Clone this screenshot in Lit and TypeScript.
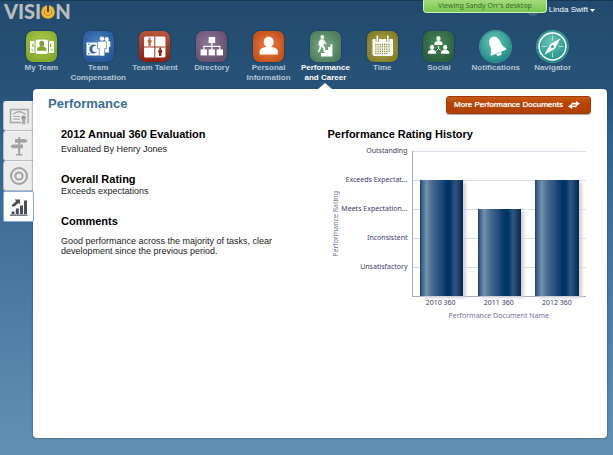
import { LitElement, html, css, svg } from "lit";
import { customElement, property, state } from "lit/decorators.js";
import { classMap } from "lit/directives/class-map.js";

const person = (x: number, y: number, s: number) => svg`
  <g transform="translate(${x} ${y}) scale(${s})">
    <ellipse cx="0" cy="-3.6" rx="2.8" ry="3.4" />
    <path d="M-5.6 5V3.200C-5.600 1-3.600.6-1.600-.4H1.600C3.600.6 5.600 1 5.600 3.200V5Z" />
  </g>`;

const figure = (x: number, y: number, s: number) => svg`
  <g transform="translate(${x} ${y}) scale(${s})">
    <circle cx="0" cy="-6.6" r="2.2" />
    <path d="M-2.6-4.600H2.600Q3.800-4.600 3.800-3.200V1.600H2.300V8H-2.300V1.600H-3.800V-3.200Q-3.800-4.600-2.600-4.600Z" />
  </g>`;

const icons: Record<string, unknown> = {
  team: svg`
    <g fill="#fff">
      <rect x="4" y="10" width="24" height="12" rx="1" />
      <rect x="9" y="8" width="13.500" height="15.500" rx="2.200" stroke="#86ab30" stroke-width="1" />
    </g>
    <g fill="#7ea22c">${person(15.8, 15.6, 0.84)}</g>
    <path d="M5.500 19h2M7 13v3M26.500 19h-2M24.500 13v3" fill="none" stroke="#86ab30" stroke-width="1.2" />`,
  compensation: svg`
    <g fill="#fff">
      <path d="M3.500 11.500h15v13h-15Z" />
      <ellipse cx="10.5" cy="18" rx="4.200" ry="4.600" fill="#2f66aa" />
      <ellipse cx="12.6" cy="18" rx="3.200" ry="3.200" />
      <path d="M5 13.200h1.600M5 22.800h1.600" stroke="#2f66aa" />
      ${figure(23.8, 14.2, 0.92)}
      <g stroke="#2f66aa" stroke-width=".5">${figure(19, 15.6, 1.18)}</g>
    </g>`,
  talent: svg`
    <rect x="5" y="5.5" width="21.5" height="21" rx="1.6" fill="#fff" />
    <path d="M15.8 5.500v21M5 16h21.500" stroke="#9c3820" stroke-width="1" />
    <g fill="#c06a38">${figure(10.6, 11, 0.5)}</g>
    <g fill="#8f1c10">${figure(21.2, 21, 0.5)}</g>`,
  directory: svg`
    <g fill="#fff">
      <rect x="12.6" y="6" width="6.6" height="6" />
      <rect x="4.6" y="18.4" width="6.4" height="6" />
      <rect x="12.6" y="18.4" width="6.4" height="6" />
      <rect x="20.6" y="18.4" width="6.4" height="6" />
    </g>
    <path d="M15.8 12v7M7.800 19v-3.600h16V19" fill="none" stroke="#fff" stroke-width="1.2" />`,
  personal: svg`
    <g fill="#fff">
      <ellipse cx="15.7" cy="11" rx="5" ry="5.4" />
      <path d="M6.600 23.400v-2.600c0-3 3-4 6.400-5h5.400c3.400 1 6.400 2 6.400 5v2.600Z" />
    </g>`,
  career: svg`
    <g fill="#fff">
      <circle cx="12.3" cy="6" r="1.9" />
      <path d="M10.8 8.3l3 .2 1.2 2.6 1.5 1.4-.6.9-2-1.3-.4 2.7 1.6 2-.3 4.2h-1.3l-.1-3.6-2-1.900-.6 2.400-1.900 3.500-1.200-.6 1.700-3.600.4-4.200-.3 1.800-1.200-.4.5-3.900Z" />
      <path d="M11 25.500v-3.400h3.800v-3.200h3.400v-3h2.200v-2.700h2v12.300Z" />
    </g>`,
  time: svg`
    <path d="M5.500 9Q5.500 8 6.500 8H25Q26 8 26 9V22.500Q26 25 23.500 25H8Q5.500 25 5.500 22.500Z" fill="#fff" />
    <path d="M10.300 5.500v5M20.800 5.500v5" stroke="#8e8a2c" stroke-width="3.400" />
    <path d="M10.300 5.500v4M20.800 5.500v4" stroke="#fff" stroke-width="1.800" stroke-linecap="round" />
    <g stroke="#8e8a2c" stroke-width="1.300" stroke-dasharray="1.3 .9">
      <path d="M8.200 13.500h15.400M8.200 15.800h15.400M8.200 18.100h15.400M8.200 20.400h15.400M8.200 22.500h13" />
    </g>`,
  social: svg`
    <g fill="#fff">
      ${person(15.5, 10.2, 0.74)}${person(9, 19, 0.74)}${person(22.2, 19, 0.74)}
    </g>
    <path d="M15.600 15v2.600M15.600 17.400l-2 2M15.600 17.400l2 2" stroke="#fff" stroke-width=".9" />`,
  bell: svg`
    <g fill="#fff" transform="rotate(-22 16 16)">
      <path d="M16.400 5.500c3.600 0 5.300 2.800 5.400 6.200.1 4.200.6 6.800 3 9.100v1.500H8v-1.500c2.400-2.300 2.900-4.900 3-9.100.1-3.400 1.800-6.200 5.400-6.200Z" />
      <path d="M13.500 22.600a2.800 2.800 0 0 0 5.600 0Z" />
    </g>`,
  compass: svg`
    <circle cx="15.500" cy="15.500" r="13.400" fill="none" stroke="#fff" stroke-width="1.500" />
    <path d="M15.500 4.500v5M15.500 21.500v5M4.500 15.500h5M21.500 15.500h5" stroke="#a9e0d4" stroke-width="1" />
    <path d="M23.600 7.200l-5.800 10.600-10.400 6 5.800-10.600Z" fill="#fff" />
    <circle cx="15.500" cy="15.500" r="1.500" fill="#3d9f92" />`,
};

const tabIcons: Record<string, unknown> = {
  certificate: svg`
    <path d="M12.500 16.500H1.500V3.500h17.600v13h-1" fill="none" stroke="#a5a5a8" stroke-width="1.4" />
    <path d="M4 8.400Q10 3 16.600 8.400M4.400 10.500h6.500M4.400 13.200h6.500" fill="none" stroke="#a5a5a8" stroke-width="1.2" />
    <circle cx="14.600" cy="11.800" r="2.300" fill="#98989c" />
    <path d="M13.200 13v6l1.500-1.200L16.200 19v-6Z" fill="#a5a5a8" />`,
  signpost: svg`
    <g fill="#a2a2a6">
      <path d="M9.200 1h2v18h-2ZM7 18h6.400v1.600H7Z" />
      <path d="M6 3h10.500l2.300 1.900-2.300 1.900H6ZM14 8.500H3.600L1.300 10.400l2.300 1.900H14Z" />
    </g>`,
  target: svg`
    <g fill="none" stroke="#a2a2a6" stroke-width="2">
      <circle cx="10" cy="10" r="8" />
      <circle cx="10" cy="10" r="3.600" />
    </g>`,
  growth: svg`
    <g fill="#4b4e58">
      <path d="M1 17.600h17.500v1.200H1ZM2.500 14.500h3V17h-3ZM6.800 11.500h3V17h-3ZM11 8.500h3V17h-3ZM15 3.500h3V17h-3Z" />
      <path d="M5.500 2.500h5.500v4.800L9.300 6 5.600 9.400H2.800V8L7.200 4.200Z" />
    </g>`,
};

interface NavItem { label: string; icon: string; tone: string; current?: boolean }

const navItems: NavItem[] = [
  { label: "My Team", icon: "team", tone: "lime" },
  { label: "Team Compensation", icon: "compensation", tone: "blue" },
  { label: "Team Talent", icon: "talent", tone: "red" },
  { label: "Directory", icon: "directory", tone: "plum" },
  { label: "Personal Information", icon: "personal", tone: "orange" },
  { label: "Performance and Career", icon: "career", tone: "sage", current: true },
  { label: "Time", icon: "time", tone: "olive" },
  { label: "Social", icon: "social", tone: "green" },
  { label: "Notifications", icon: "bell", tone: "teal" },
  { label: "Navigator", icon: "compass", tone: "teal" },
];

@customElement("vision-nav")
export class VisionNav extends LitElement {
  static styles = css`
    :host { display: block; }
    .nav { display: grid; grid-template-columns: repeat(10, minmax(0, 1fr)); padding: 0 32px 0 13px; }
    .item {
      position: relative; display: flex; flex-direction: column; align-items: center; height: 58px;
      color: #b3c3d3; font-size: 8px; line-height: 10px; font-weight: bold; text-align: center; text-decoration: none;
    }
    .icon { width: 31px; height: 31px; border-radius: 7px; margin-bottom: 1px; box-shadow: 0 0 2px #12304c; }
    .icon svg { display: block; }
    .label { width: 56px; }
    .current { color: #fff; }
    .current::after {
      content: ""; position: absolute; bottom: 0; left: 50%; margin-left: -7px;
      border: 7px solid transparent; border-top: 0; border-bottom: 6px solid #fff;
    }
    .lime { background: radial-gradient(circle at 50% 40%, #b2d050, #86aa30 75%); }
    .blue { background: radial-gradient(circle at 50% 40%, #4a86c8, #28589a 75%); }
    .red { background: linear-gradient(#b9583a, #8c1d10); }
    .plum { background: radial-gradient(circle at 40% 40%, #8d7596, #665070 75%); }
    .orange { background: radial-gradient(circle at 50% 50%, #e8824a, #c8531c 75%); }
    .sage { background: radial-gradient(circle at 45% 50%, #7cab82, #4f7e5e 75%); }
    .olive { background: radial-gradient(circle at 50% 50%, #b4b050, #858026 75%); }
    .green { background: radial-gradient(circle at 50% 40%, #4a885a, #2c603e 75%); }
    .teal { background: radial-gradient(circle at 45% 35%, #6cc6b8, #218e86 75%); border-radius: 50%; box-shadow: 0 0 0 1px #3a9b97; }
  `;

  render() {
    return html`<nav class="nav" aria-label="Main">
      ${navItems.map((n) => html`
        <a class=${classMap({ item: true, current: !!n.current })} href="#${n.icon}">
          <span class="icon ${n.tone}"><svg width="31" height="31" viewBox="0 0 31 31" aria-hidden="true">${icons[n.icon]}</svg></span>
          <span class="label">${n.label}</span>
        </a>`)}
    </nav>`;
  }
}

@customElement("rating-chart")
export class RatingChart extends LitElement {
  @property({ attribute: false }) levels = ["Outstanding", "Exceeds Expectat...", "Meets Expectation...", "Inconsistent", "Unsatisfactory"];
  @property({ attribute: false }) bars = [
    { name: "2010 360", value: 4 },
    { name: "2011 360", value: 3 },
    { name: "2012 360", value: 4 },
  ];

  static styles = css`
    :host { display: block; font-family: "Noto Sans", sans-serif; font-size: 7px; line-height: 10px; color: #3c3c66; }
    .chart { display: grid; grid-template-columns: 16px 64px minmax(0, 1fr); column-gap: 2px; }
    .ytitle { writing-mode: vertical-rl; transform: rotate(180deg); text-align: center; color: #74749a; align-self: center; justify-self: center; }
    .levels { display: flex; flex-direction: column; text-align: right; margin-top: -5px; white-space: nowrap; padding-right: 2px; align-items: flex-end; }
    .level { height: 29px; }
    .plot {
      height: 145px; border-left: 1px solid #a9a9cc; border-bottom: 1px solid #a9a9cc;
      background: repeating-linear-gradient(#dcdce9 0 1px, transparent 1px 29px);
      display: grid; grid-template-columns: repeat(3, 1fr); align-items: end; justify-items: center;
    }
    .bar {
      width: 75%; box-shadow: 3px 2px 3px #d3d3d8;
      background: linear-gradient(90deg, #1c426c, #44698f 6%, #7490ad 15%, #476b91 28%, #224c7b 48%, #013466 62%, #013466 70%, #2c5580 80%, #244d79 86%, #05264c);
    }
    .names { grid-column: 3; display: grid; grid-template-columns: repeat(3, 1fr); text-align: center; margin-top: 1px; }
    .xtitle { grid-column: 3; text-align: center; color: #74749a; margin-top: 3px; white-space: nowrap; }
  `;

  render() {
    const step = 100 / this.levels.length;
    return html`<div class="chart" role="img" aria-label="Performance rating by document">
      <div class="ytitle">Performance Rating</div>
      <div class="levels">${this.levels.map((l) => html`<span class="level">${l}</span>`)}</div>
      <div class="plot">${this.bars.map((b) => html`<div class="bar" style="height:${b.value * step}%"></div>`)}</div>
      <div class="names">${this.bars.map((b) => html`<span>${b.name}</span>`)}</div>
      <div class="xtitle">Performance Document Name</div>
    </div>`;
  }
}

@customElement("app-root")
export class AppRoot extends LitElement {
  @state() private tab = "growth";

  static styles = css`
    :host {
      display: flex; flex-direction: column; min-height: 100vh; box-sizing: border-box;
      font-family: "Liberation Sans", Arial, sans-serif; color: #222;
      background: linear-gradient(#224a6e, #285379 20%, #2f628f 30%, #49769f 60%, #6290b5);
      border-top: 1px solid #183854;
    }
    .top { position: relative; display: flex; justify-content: space-between; height: 30px; padding: 0 18px 0 4px; box-sizing: border-box; }
    .brand { display: flex; align-items: center; height: 21px; color: #bcbcbf; font: 900 20px/21px Lato, sans-serif; }
    .banner {
      position: absolute; top: -1px; right: 66px; width: 122px; height: 12px; border: 1px solid #cfeebb; border-top: 0;
      border-radius: 0 0 4px 4px; background: linear-gradient(#a5db7b, #77c850); color: #3c6a2a;
      font: 7px/11px "Noto Sans", sans-serif; text-align: center;
    }
    .user { display: flex; align-items: center; gap: 2px; height: 18px; padding: 0; border: 0; background: none; color: #fff; font: 8px/10px "Liberation Sans", sans-serif; }
    .avatar { width: 12px; height: 12px; border-radius: 50%; background: #426282; margin-right: 8px; }
    .body { flex: 1; display: flex; padding: 0 6px 17px 3px; }
    .tabs { display: flex; flex-direction: column; width: 30px; padding-top: 12px; }
    .tab {
      display: flex; align-items: center; justify-content: center; width: 30px; height: 30px; padding: 0;
      border: 1px solid #b9bcc0; border-top-color: #f4f4f4; border-right: 0; border-radius: 3px 0 0 3px; background: #ececed;
    }
    .tab.active { position: relative; width: 31px; height: 31px; background: #fff; border: 1px solid #86acd9; border-radius: 2px; }
    .panel { flex: 1; min-width: 0; background: #fff; border-radius: 4px; box-shadow: 0 0 2px #1b4266; padding: 7px 16px 16px 15px; }
    .head { display: flex; justify-content: space-between; align-items: center; height: 18px; }
    .title { margin: 0; font-size: 13px; line-height: 16px; color: #3d6e96; padding-bottom: 3px; }
    .more {
      display: flex; align-items: center; gap: 5px; height: 18px; padding: 0 10px 0 7px; border: 1px solid #a03a04; border-radius: 3px;
      background: linear-gradient(#c65a14, #b54402 40%, #b04000); color: #fff; font: 8px/10px "Liberation Sans", sans-serif;
      text-shadow: 0 0 1px #fff; box-shadow: 0 1px 1px #aaa;
    }
    .cols { display: grid; grid-template-columns: minmax(0, 1fr) minmax(0, 1fr); gap: 8px; padding: 13px 5px 0 13px; }
    h2 { margin: 0; font-size: 11px; line-height: 14px; color: #000; }
    p { margin: 0; font-size: 9px; line-height: 10px; }
    .by { margin-top: 3px; }
    .section { margin-top: 18px; }
    .note { margin-top: 8px; max-width: 216px; }
    .history { margin-bottom: 10px; }
  `;

  render() {
    const tabs = [["certificate", "Certificates"], ["signpost", "Career path"], ["target", "Goals"], ["growth", "Performance"]];
    return html`
      <header class="top">
        <div class="brand" aria-label="Vision">
          <span>VISI</span>
          <svg width="14" height="15" viewBox="0 0 14 15" aria-hidden="true">
            <circle cx="7" cy="8" r="6.800" fill="#f6b62e" />
            <path d="M4.700 5.200A3.600 3.600 0 1 0 9.300 5.200" fill="none" stroke="#c08a2a" stroke-width="1" />
            <path d="M7 0v8" stroke="#2a4d6e" stroke-width="2" />
          </svg>
          <span>N</span>
        </div>
        <button class="user" type="button">
          <span class="avatar"></span>Linda Swift
          <svg width="5" height="3" viewBox="0 0 5 3" aria-hidden="true"><path d="M0 0h5L2.500 3Z" fill="#fff" /></svg>
        </button>
        <div class="banner">Viewing Sandy Orr's desktop</div>
      </header>
      <vision-nav></vision-nav>
      <div class="body">
        <div class="tabs">
          ${tabs.map(([id, name]) => html`
            <button type="button" class=${classMap({ tab: true, active: this.tab === id })} aria-label=${name} @click=${() => (this.tab = id)}>
              <svg width="20" height="20" viewBox="0 0 20 20" aria-hidden="true">${tabIcons[id]}</svg>
            </button>`)}
        </div>
        <main class="panel">
          <div class="head">
            <h1 class="title">Performance</h1>
            <button class="more" type="button">More Performance Documents
              <svg width="12" height="8" viewBox="0 0 12 8" aria-hidden="true">
                <path d="M3.500 1.800H8V0l4 2.600-4 2.600V3.400H3.500ZM8.500 6.200H4V8L0 5.400l4-2.600v1.800h4.500Z" fill="#fff" />
              </svg>
            </button>
          </div>
          <div class="cols">
            <section>
              <h2>2012 Annual 360 Evaluation</h2>
              <p class="by">Evaluated By Henry Jones</p>
              <h2 class="section">Overall Rating</h2>
              <p>Exceeds expectations</p>
              <h2 class="section">Comments</h2>
              <p class="note">Good performance across the majority of tasks, clear development since the previous period.</p>
            </section>
            <section>
              <h2 class="history">Performance Rating History</h2>
              <rating-chart></rating-chart>
            </section>
          </div>
        </main>
      </div>`;
  }
}
